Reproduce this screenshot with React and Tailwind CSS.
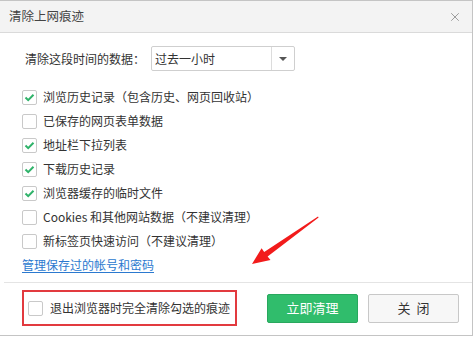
import { X } from "lucide-react";

const items = [
  { label: "浏览历史记录（包含历史、网页回收站）", checked: true },
  { label: "已保存的网页表单数据", checked: false },
  { label: "地址栏下拉列表", checked: true },
  { label: "下载历史记录", checked: true },
  { label: "浏览器缓存的临时文件", checked: true },
  { label: "Cookies 和其他网站数据（不建议清理）", checked: false },
  { label: "新标签页快速访问（不建议清理）", checked: false },
];

function Check({ checked }) {
  return (
    <span className="flex h-[15px] w-[15px] shrink-0 items-center justify-center rounded-[2px] border border-[#c9c9c9] bg-white">
      {checked && (
        <svg width="11" height="9" viewBox="0 0 11 9">
          <path d="M1.5 4.5 L4.2 7.2 L9.5 1.8" fill="none" stroke="#2fb36a" strokeWidth="2" />
        </svg>
      )}
    </span>
  );
}

export default function App() {
  return (
    <div
      className="relative h-[338px] w-[474px] bg-white text-[12px] text-[#333]"
      style={{ fontFamily: '"Noto Sans CJK SC", "Noto Sans", sans-serif' }}
    >
      <div className="flex h-[336px] w-[473px] flex-col border-t border-r border-b border-[#c4c4c4]">
        {/* Title bar */}
        <div className="flex h-[32px] shrink-0 items-center justify-between border-b border-[#dadada] bg-[#f3f3f3] pl-[9px] pr-[10px]">
          <span className="text-[12.5px] text-[#444]">清除上网痕迹</span>
          <X size={14} strokeWidth={1.2} className="text-[#777]" />
        </div>

        {/* Time range */}
        <div className="mt-[13px] flex h-[25px] items-center pl-[25px]">
          <span>清除这段时间的数据：</span>
          <div className="ml-[6px] flex h-[25px] w-[144px] items-center rounded-[2px] border border-[#cfcfcf]">
            <span className="flex-1 pl-[3px]">过去一小时</span>
            <span className="flex h-full w-[23px] items-center justify-center border-l border-[#dcdcdc]">
              <svg width="8" height="4" viewBox="0 0 8 4">
                <path d="M0 0 L8 0 L4 4 Z" fill="#555" />
              </svg>
            </span>
          </div>
        </div>

        {/* Options */}
        <div className="mt-[14px] flex flex-col pl-[22px]">
          {items.map((it) => (
            <div key={it.label} className="flex h-[24px] items-center gap-[6px]">
              <Check checked={it.checked} />
              <span>{it.label}</span>
            </div>
          ))}
          <div className="flex h-[24px] items-center">
            <span className="text-[#2b79cf] underline underline-offset-2">管理保存过的帐号和密码</span>
          </div>
        </div>

        {/* Footer */}
        <div className="mt-[5px] ml-[4px] border-t border-[#e4e4e4]" />
        <div className="mt-[7px] flex items-center pl-[22px] pr-[13px]">
          <div className="flex h-[36px] w-[215px] items-center gap-[7px] border-2 border-[#e23a3f] pl-[4px]">
            <Check checked={false} />
            <span>退出浏览器时完全清除勾选的痕迹</span>
          </div>
          <div className="ml-auto flex gap-[10px]">
            <button className="flex h-[29px] w-[91px] items-center justify-center rounded-[2px] border border-[#29a85e] bg-[#30bd6c] text-[13px] text-white">
              立即清理
            </button>
            <button className="flex h-[29px] w-[91px] items-center justify-center rounded-[2px] border border-[#c8c8c8] bg-[#f7f7f7] text-[13px] text-[#333]">
              关&nbsp;&nbsp;闭
            </button>
          </div>
        </div>
      </div>

      {/* Red annotation arrow */}
      <svg className="pointer-events-none absolute left-0 top-0" width="474" height="338">
        <polygon
          points="318,216.5 318.6,217.6 267.6,256.4 270.5,260 252,264 261.6,248.2 264.2,251.9"
          fill="#f21b1b"
        />
      </svg>
    </div>
  );
}
